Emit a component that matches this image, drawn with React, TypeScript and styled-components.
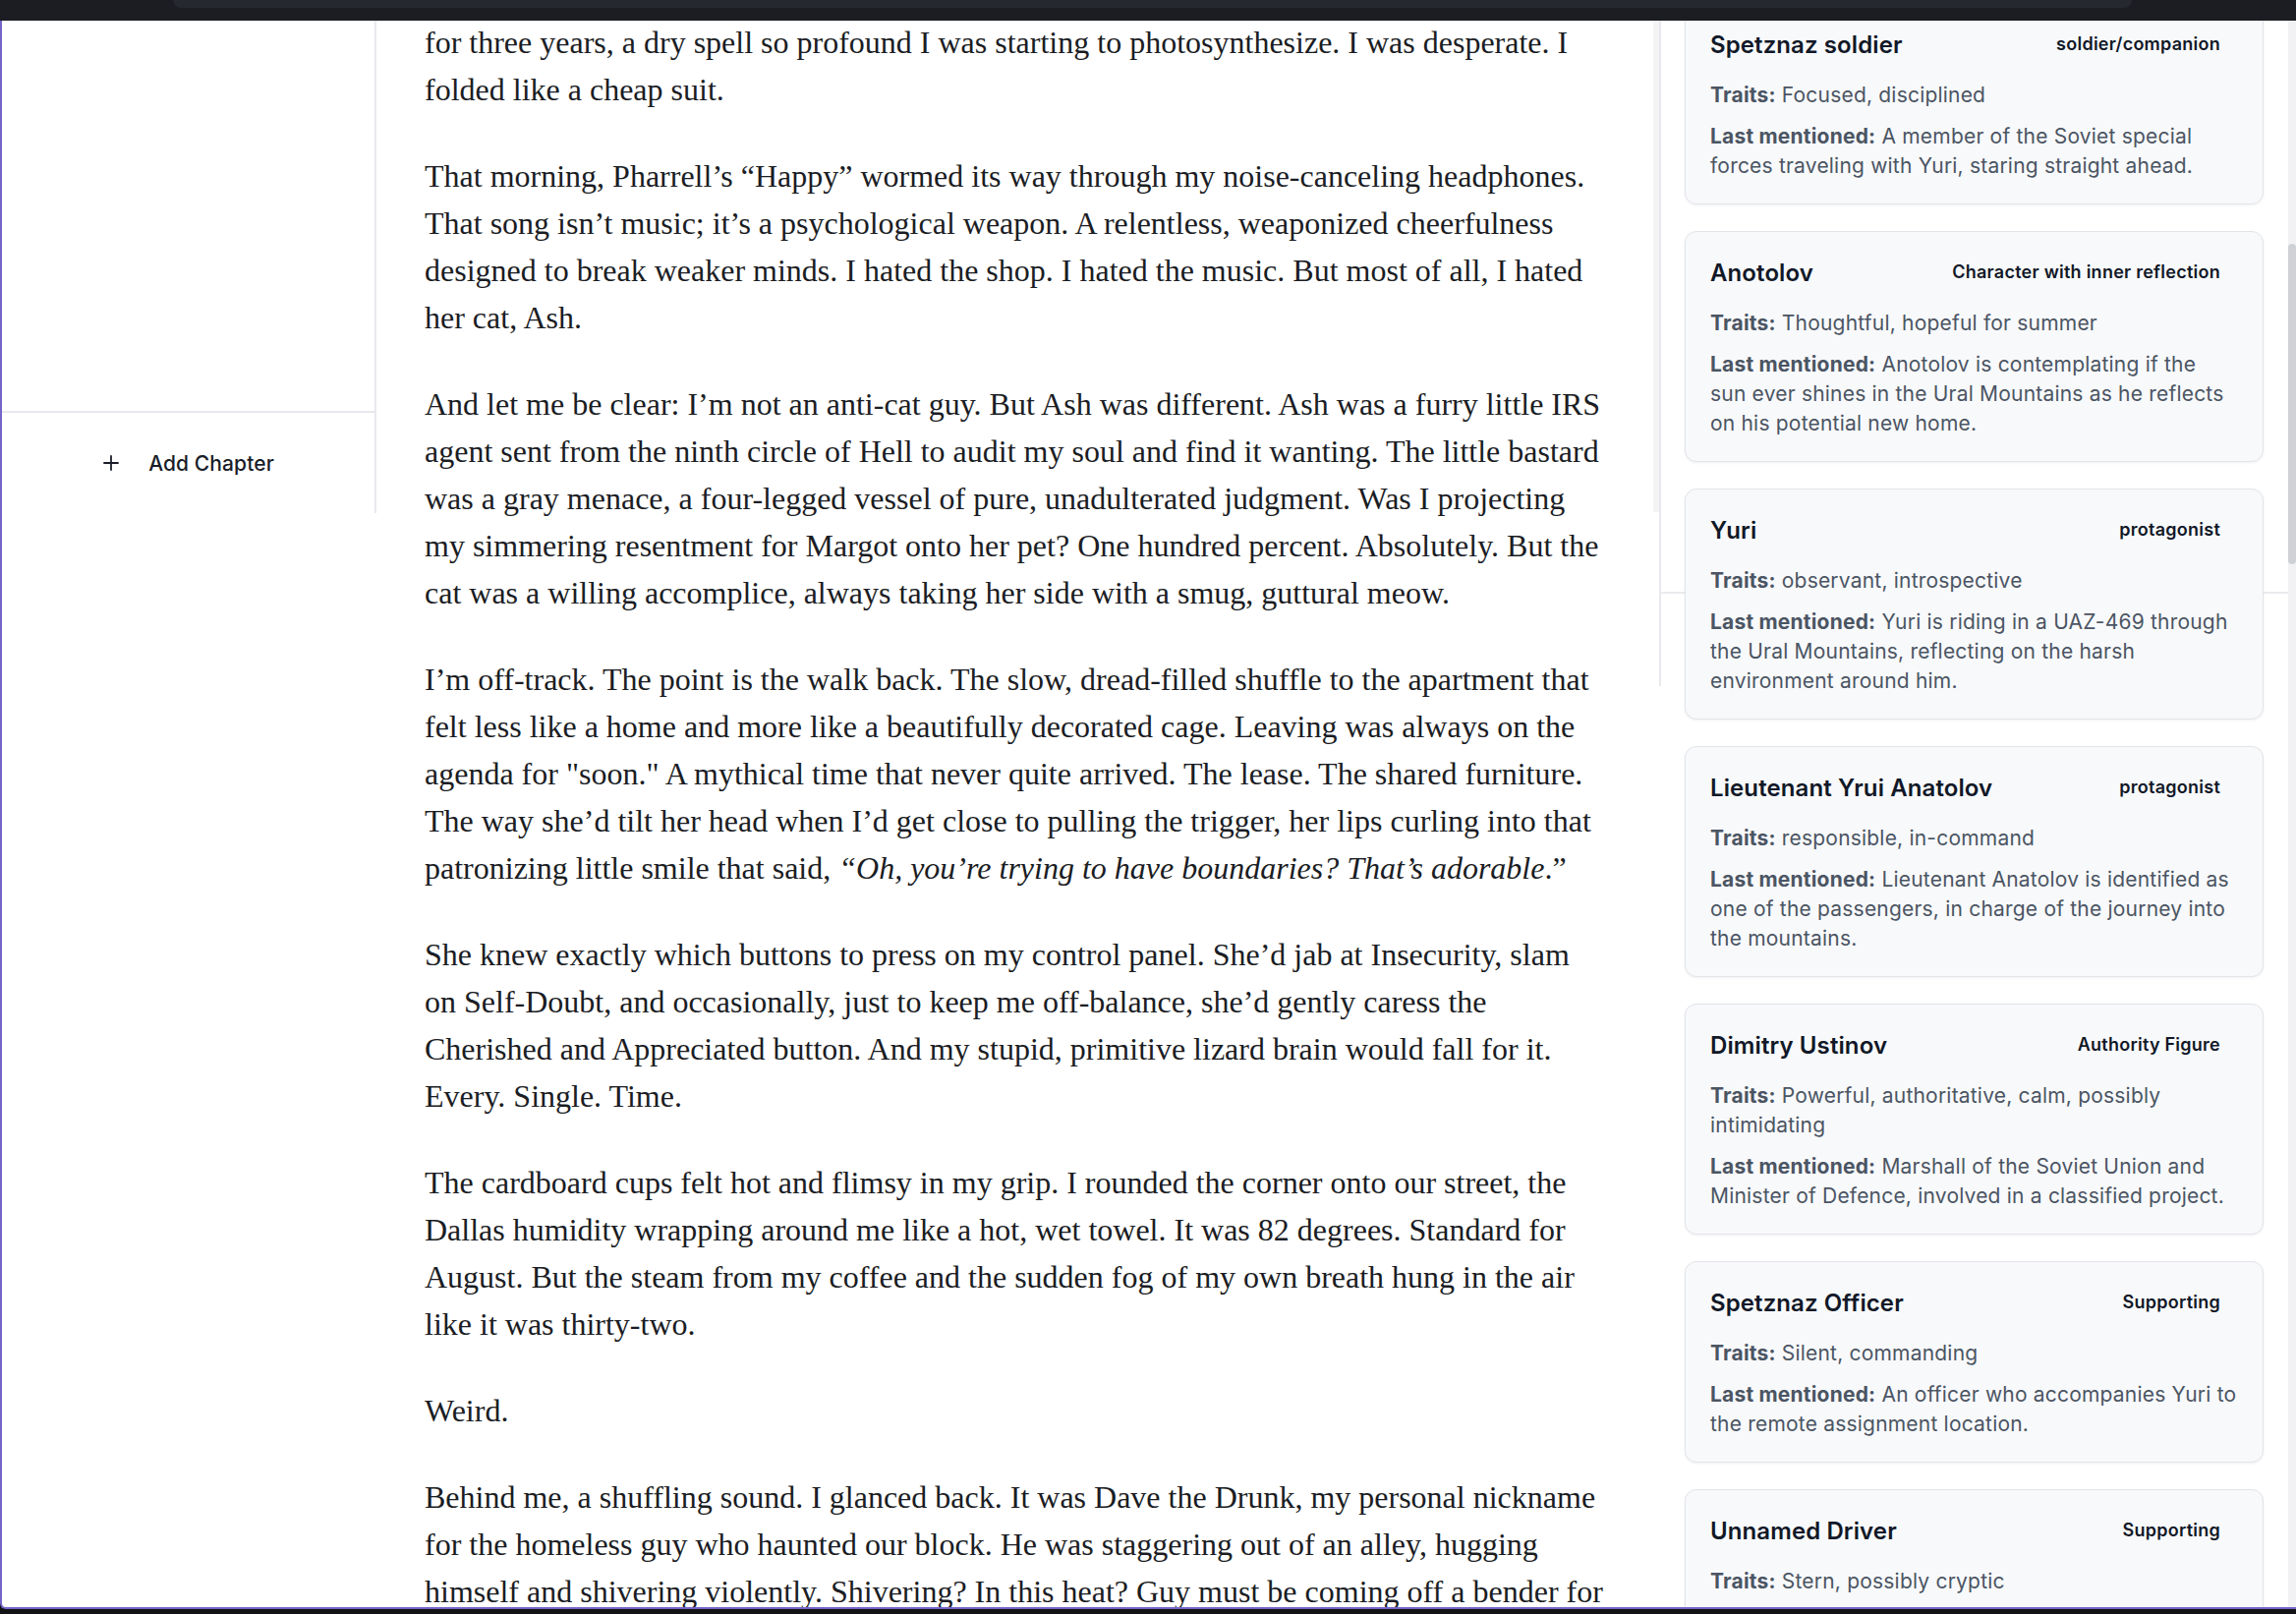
import React from 'react';
import styled, { createGlobalStyle } from 'styled-components';
import { Plus } from 'lucide-react';

// --- Data ---

type Paragraph = (string | React.ReactNode)[];

const PARAGRAPHS: Paragraph[] = [
  [
    'for three years, a dry spell so profound I was starting to photosynthesize. I was desperate. I',
    'folded like a cheap suit.',
  ],
  [
    'That morning, Pharrell’s “Happy” wormed its way through my noise-canceling headphones.',
    'That song isn’t music; it’s a psychological weapon. A relentless, weaponized cheerfulness',
    'designed to break weaker minds. I hated the shop. I hated the music. But most of all, I hated',
    'her cat, Ash.',
  ],
  [
    'And let me be clear: I’m not an anti-cat guy. But Ash was different. Ash was a furry little IRS',
    'agent sent from the ninth circle of Hell to audit my soul and find it wanting. The little bastard',
    'was a gray menace, a four-legged vessel of pure, unadulterated judgment. Was I projecting',
    'my simmering resentment for Margot onto her pet? One hundred percent. Absolutely. But the',
    'cat was a willing accomplice, always taking her side with a smug, guttural meow.',
  ],
  [
    'I’m off-track. The point is the walk back. The slow, dread-filled shuffle to the apartment that',
    'felt less like a home and more like a beautifully decorated cage. Leaving was always on the',
    'agenda for "soon." A mythical time that never quite arrived. The lease. The shared furniture.',
    'The way she’d tilt her head when I’d get close to pulling the trigger, her lips curling into that',
    <>
      patronizing little smile that said, <em>“Oh, you’re trying to have boundaries? That’s adorable</em>.”
    </>,
  ],
  [
    'She knew exactly which buttons to press on my control panel. She’d jab at Insecurity, slam',
    'on Self-Doubt, and occasionally, just to keep me off-balance, she’d gently caress the',
    'Cherished and Appreciated button. And my stupid, primitive lizard brain would fall for it.',
    'Every. Single. Time.',
  ],
  [
    'The cardboard cups felt hot and flimsy in my grip. I rounded the corner onto our street, the',
    'Dallas humidity wrapping around me like a hot, wet towel. It was 82 degrees. Standard for',
    'August. But the steam from my coffee and the sudden fog of my own breath hung in the air',
    'like it was thirty-two.',
  ],
  ['Weird.'],
  [
    'Behind me, a shuffling sound. I glanced back. It was Dave the Drunk, my personal nickname',
    'for the homeless guy who haunted our block. He was staggering out of an alley, hugging',
    'himself and shivering violently. Shivering? In this heat? Guy must be coming off a bender for',
  ],
];

interface Character {
  name: string;
  role: string;
  traits: string[];
  lastMentioned?: string[];
}

// lines are kept as the panel wraps them
const CHARACTERS: Character[] = [
  {
    name: 'Spetznaz soldier',
    role: 'soldier/companion',
    traits: ['Focused, disciplined'],
    lastMentioned: ['A member of the Soviet special', 'forces traveling with Yuri, staring straight ahead.'],
  },
  {
    name: 'Anotolov',
    role: 'Character with inner reflection',
    traits: ['Thoughtful, hopeful for summer'],
    lastMentioned: [
      'Anotolov is contemplating if the',
      'sun ever shines in the Ural Mountains as he reflects',
      'on his potential new home.',
    ],
  },
  {
    name: 'Yuri',
    role: 'protagonist',
    traits: ['observant, introspective'],
    lastMentioned: [
      'Yuri is riding in a UAZ-469 through',
      'the Ural Mountains, reflecting on the harsh',
      'environment around him.',
    ],
  },
  {
    name: 'Lieutenant Yrui Anatolov',
    role: 'protagonist',
    traits: ['responsible, in-command'],
    lastMentioned: [
      'Lieutenant Anatolov is identified as',
      'one of the passengers, in charge of the journey into',
      'the mountains.',
    ],
  },
  {
    name: 'Dimitry Ustinov',
    role: 'Authority Figure',
    traits: ['Powerful, authoritative, calm, possibly', 'intimidating'],
    lastMentioned: [
      'Marshall of the Soviet Union and',
      'Minister of Defence, involved in a classified project.',
    ],
  },
  {
    name: 'Spetznaz Officer',
    role: 'Supporting',
    traits: ['Silent, commanding'],
    lastMentioned: ['An officer who accompanies Yuri to', 'the remote assignment location.'],
  },
  {
    name: 'Unnamed Driver',
    role: 'Supporting',
    traits: ['Stern, possibly cryptic'],
  },
];

// --- Styled Components ---

const GlobalStyle = createGlobalStyle`
  html, body {
    margin: 0;
    padding: 0;
    background: #131316;
  }
  body {
    width: 2336px;
    height: 1642px;
    overflow: hidden;
    font-family: Inter, "Noto Sans", sans-serif;
  }
  * {
    box-sizing: border-box;
  }
`;

const Screen = styled.div`
  width: 2336px;
  height: 1642px;
  display: flex;
  flex-direction: column;
  background: #131316;
  overflow: hidden;
`;

const TopBar = styled.div`
  height: 21px;
  flex-shrink: 0;
  background: #1c1d23;
  padding-left: 176px;
`;

const AddressStrip = styled.div`
  width: 1993px;
  height: 8px;
  background: #262830;
  border-radius: 0 0 8px 8px;
`;

const Window = styled.div`
  height: 1616px;
  flex-shrink: 0;
  display: flex;
  align-items: flex-start;
  background: #ffffff;
  border-left: 2px solid #7464c9;
  border-bottom: 2px solid #7464c9;
  border-bottom-left-radius: 6px;
  overflow: hidden;
`;

const Sidebar = styled.aside`
  width: 381px;
  height: 501px;
  flex-shrink: 0;
  display: flex;
  flex-direction: column;
  border-right: 2px solid #e8e8ed;
`;

const ChapterList = styled.div`
  flex: 1;
`;

const SidebarFooter = styled.div`
  height: 104px;
  border-top: 2px solid #e8e8ed;
  display: flex;
  align-items: center;
  justify-content: center;
`;

const AddChapterButton = styled.button`
  display: flex;
  align-items: center;
  gap: 26px;
  padding: 0;
  margin-left: -3px;
  background: none;
  border: none;
  font-family: Inter, "Noto Sans", sans-serif;
  font-size: 21px;
  font-weight: 500;
  letter-spacing: 0.1px;
  color: #1a1d29;
  cursor: pointer;
`;

const Editor = styled.main`
  width: 1299px;
  height: 100%;
  flex-shrink: 0;
  padding-left: 49px;
  overflow: hidden;
`;

const Prose = styled.article`
  margin-top: -2px;
  font-family: "Liberation Serif", "Times New Roman", serif;
  font-size: 32px;
  line-height: 48px;
  color: #1b1d24;

  em {
    font-style: italic;
  }
`;

const ProseParagraph = styled.p`
  margin: 0 0 40px;
  white-space: nowrap;
`;

const EditorTrack = styled.div`
  width: 6px;
  height: 500px;
  flex-shrink: 0;
  background: #f4f4f7;
`;

const RightPanel = styled.section`
  position: relative;
  width: 648px;
  height: 100%;
  flex-shrink: 0;
`;

const PanelFrame = styled.div`
  height: 677px;
  border-left: 2px solid #e8e8ed;
`;

const PanelHeader = styled.div`
  height: 583px;
  border-bottom: 2px solid #ebebef;
`;

const CardOverlay = styled.div`
  position: absolute;
  inset: 0;
  display: flex;
  overflow: hidden;
`;

const CardList = styled.div`
  flex: 1;
  margin-top: -18px;
  padding: 0 25px 0 26px;
  display: flex;
  flex-direction: column;
  gap: 27px;
`;

const Card = styled.div`
  flex-shrink: 0;
  background: #f8f9fb;
  border: 1px solid #e2e4e9;
  border-radius: 12px;
  box-shadow: 0 1px 3px rgba(16, 24, 40, 0.06);
  padding: 24px 25px 23px;
`;

const CardHeader = styled.div`
  display: flex;
  align-items: flex-start;
  justify-content: space-between;
  margin-bottom: 18px;
`;

const CardName = styled.h3`
  margin: 0;
  font-size: 24px;
  line-height: 36px;
  font-weight: 600;
  letter-spacing: 0.1px;
  color: #111827;
`;

const CardRole = styled.span`
  margin-top: 3px;
  padding-right: 18px;
  font-size: 18px;
  line-height: 27px;
  font-weight: 600;
  letter-spacing: 0.25px;
  color: #111827;
`;

const CardDetail = styled.p<{ $spaced?: boolean }>`
  margin: ${(p) => (p.$spaced ? '12px 0 0' : '0')};
  font-size: 21px;
  line-height: 30px;
  letter-spacing: 0.2px;
  white-space: nowrap;
  color: #4b5563;

  strong {
    font-weight: 700;
    color: #4b5563;
  }
`;

const ScrollTrack = styled.div`
  width: 8px;
  flex-shrink: 0;
  background: #f2f2f5;
  padding-top: 227px;
`;

const ScrollThumb = styled.div`
  height: 326px;
  border-radius: 4px;
  background: #cfd1d6;
`;

// --- Components ---

function Lines({ lines }: { lines: string[] }) {
  return (
    <>
      {lines.map((line, i) => (
        <React.Fragment key={i}>
          {i > 0 && <br />}
          {line}
        </React.Fragment>
      ))}
    </>
  );
}

function CharacterCard({ character }: { character: Character }) {
  return (
    <Card>
      <CardHeader>
        <CardName>{character.name}</CardName>
        <CardRole>{character.role}</CardRole>
      </CardHeader>
      <CardDetail>
        <strong>Traits:</strong> <Lines lines={character.traits} />
      </CardDetail>
      {character.lastMentioned && (
        <CardDetail $spaced>
          <strong>Last mentioned:</strong> <Lines lines={character.lastMentioned} />
        </CardDetail>
      )}
    </Card>
  );
}

export default function App() {
  return (
    <Screen>
      <GlobalStyle />
      <TopBar>
        <AddressStrip />
      </TopBar>
      <Window>
        <Sidebar>
          <ChapterList />
          <SidebarFooter>
            <AddChapterButton>
              <Plus size={24} strokeWidth={1.8} />
              Add Chapter
            </AddChapterButton>
          </SidebarFooter>
        </Sidebar>

        <Editor>
          <Prose>
            {PARAGRAPHS.map((lines, i) => (
              <ProseParagraph key={i}>
                {lines.map((line, j) => (
                  <React.Fragment key={j}>
                    {j > 0 && <br />}
                    {line}
                  </React.Fragment>
                ))}
              </ProseParagraph>
            ))}
          </Prose>
        </Editor>

        <EditorTrack />

        <RightPanel>
          <PanelFrame>
            <PanelHeader />
          </PanelFrame>
          <CardOverlay>
            <CardList>
              {CHARACTERS.map((c) => (
                <CharacterCard key={c.name + c.role} character={c} />
              ))}
            </CardList>
            <ScrollTrack>
              <ScrollThumb />
            </ScrollTrack>
          </CardOverlay>
        </RightPanel>
      </Window>
    </Screen>
  );
}
